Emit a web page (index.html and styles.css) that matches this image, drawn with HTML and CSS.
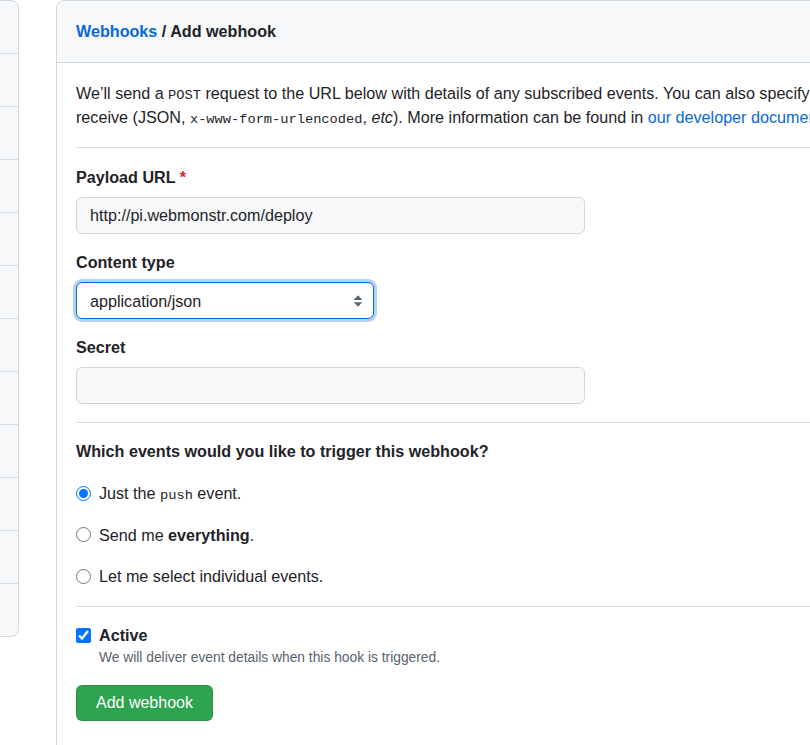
FILE: index.html
```html
<!DOCTYPE html>
<html lang="en">
<head>
<meta charset="utf-8">
<title>Add webhook</title>
<link rel="stylesheet" href="styles.css">
</head>
<body>
<div class="layout">
  <nav class="menu" aria-label="Settings">
    <a class="menu-item" href="#" aria-label="General"></a>
    <a class="menu-item" href="#" aria-label="Access"></a>
    <a class="menu-item" href="#" aria-label="Branches"></a>
    <a class="menu-item" href="#" aria-label="Tags"></a>
    <a class="menu-item" href="#" aria-label="Rules"></a>
    <a class="menu-item" href="#" aria-label="Actions"></a>
    <a class="menu-item" href="#" aria-label="Webhooks"></a>
    <a class="menu-item" href="#" aria-label="Pages"></a>
    <a class="menu-item" href="#" aria-label="Security"></a>
    <a class="menu-item" href="#" aria-label="Secrets"></a>
    <a class="menu-item" href="#" aria-label="Apps"></a>
    <a class="menu-item" href="#" aria-label="Email"></a>
  </nav>
  <main class="card">
    <div class="card-header"><a class="crumb-link" href="#">Webhooks</a> / Add webhook</div>
    <form class="card-body">
      <p class="intro">We’ll send a <code>POST</code> request to the URL below with details of any subscribed events. You can also specify which data format you’d like to receive (JSON, <code>x-www-form-urlencoded</code>, <em>etc</em>). More information can be found in <a href="#">our developer documentation</a>.</p>
      <hr class="divider">
      <div class="group">
        <label class="label" for="url">Payload URL <span class="req">*</span></label>
        <input class="input" id="url" type="text" value="http://pi.webmonstr.com/deploy">
      </div>
      <div class="group">
        <label class="label" for="ctype">Content type</label>
        <div class="select-wrap">
          <select class="select" id="ctype">
            <option>application/json</option>
            <option>application/x-www-form-urlencoded</option>
          </select>
          <svg class="select-arrow" viewBox="0 0 16 16" width="18" height="18" aria-hidden="true"><path d="M4.427 9.427l3.396 3.396a.25.25 0 00.354 0l3.396-3.396A.25.25 0 0011.396 9H4.604a.25.25 0 00-.177.427zM4.427 6.573l3.396-3.396a.25.25 0 01.354 0l3.396 3.396A.25.25 0 0111.396 7H4.604a.25.25 0 01-.177-.427z"/></svg>
        </div>
      </div>
      <div class="group">
        <label class="label" for="secret">Secret</label>
        <input class="input" id="secret" type="text" value="">
      </div>
      <hr class="divider divider-events">
      <h3 class="events-title">Which events would you like to trigger this webhook?</h3>
      <div class="options">
        <label class="option"><input type="radio" name="ev" checked> <span>Just the <code>push</code> event.</span></label>
        <label class="option"><input type="radio" name="ev"> <span>Send me <strong>everything</strong>.</span></label>
        <label class="option"><input type="radio" name="ev"> <span>Let me select individual events.</span></label>
      </div>
      <hr class="divider divider-active">
      <label class="check-row"><input type="checkbox" checked> <span class="check-label">Active</span></label>
      <p class="note">We will deliver event details when this hook is triggered.</p>
      <button class="btn-primary" type="submit">Add webhook</button>
    </form>
  </main>
</div>
</body>
</html>
```

FILE: styles.css
```css
html, body {
  overflow: hidden;
}

body {
  margin: 0;
  background: #ffffff;
  color: #1f2328;
  font-family: "Liberation Sans", Arial, sans-serif;
  font-size: 16.15px;
  line-height: 24px;
}

.layout {
  display: flex;
  align-items: flex-start;
  gap: 37px;
  margin-left: -202px;
}

.menu {
  flex: 0 0 219px;
  display: flex;
  flex-direction: column;
  border: 1px solid #d0d7de;
  border-radius: 8px;
  background: #f6f8fa;
  overflow: hidden;
}

.menu-item {
  display: block;
  box-sizing: border-box;
  height: 53px;
  border-bottom: 1px solid #d8dee4;
}

.menu-item:last-child {
  height: 52px;
  border-bottom: 0;
}

.card {
  flex: 0 0 1020px;
  border: 1px solid #d0d7de;
  border-radius: 8px;
}

.card-header {
  padding: 18px 19px 19px;
  background: #f6f8fa;
  border-bottom: 1px solid #d0d7de;
  border-radius: 8px 8px 0 0;
  font-weight: bold;
  line-height: 24px;
}

.crumb-link {
  color: #0969da;
  text-decoration: none;
}

.card-body {
  padding: 18px 19px 40px;
}

.intro {
  margin: 0;
  line-height: 24px;
}

.intro a {
  color: #0969da;
  text-decoration: none;
}

code {
  font-family: "Liberation Mono", monospace;
  font-size: 13.7px;
  line-height: 1;
}

.divider {
  height: 1px;
  margin: 18px 0 17px;
  border: 0;
  background: #d8dee4;
}

.group {
  display: flex;
  flex-direction: column;
  align-items: flex-start;
  gap: 8px;
}

.group + .group {
  margin-top: 16px;
}

.label {
  font-weight: bold;
  line-height: 24px;
}

.req {
  color: #d1242f;
}

.input {
  box-sizing: border-box;
  width: 509px;
  height: 37px;
  padding: 0 13px;
  border: 1px solid #d0d7de;
  border-radius: 6px;
  background: #f6f8fa;
  color: #1f2328;
  font: inherit;
  outline: none;
}

.select-wrap {
  position: relative;
  width: 298px;
}

.select {
  appearance: none;
  -webkit-appearance: none;
  display: block;
  box-sizing: border-box;
  width: 100%;
  height: 37px;
  padding: 0 30px 0 13px;
  border: 1px solid #0969da;
  border-radius: 6px;
  background: #ffffff;
  box-shadow: 0 0 0 3px rgba(9, 105, 218, 0.3);
  color: #1f2328;
  font: inherit;
  outline: none;
}

.select-arrow {
  position: absolute;
  top: 9.5px;
  right: 7px;
  fill: #59636e;
  pointer-events: none;
}

.divider-events {
  margin: 18px 0 16px;
}

.events-title {
  margin: 0 0 18px;
  font-size: 16.15px;
  font-weight: bold;
  line-height: 24px;
}

.options {
  display: flex;
  flex-direction: column;
  gap: 17.5px;
}

.option,
.check-row {
  display: flex;
  align-items: center;
  gap: 8px;
  height: 24px;
  line-height: 24px;
}

.option input,
.check-row input {
  width: 15px;
  height: 15px;
  margin: 0;
}

.divider-active {
  margin: 18px 0 16px;
}

.check-label {
  font-weight: bold;
}

.note {
  margin: 0 0 0 23px;
  padding-top: 1px;
  color: #59636e;
  font-size: 13.8px;
  line-height: 20px;
}

.btn-primary {
  display: block;
  box-sizing: border-box;
  height: 36px;
  margin-top: 17px;
  padding: 0 19px;
  border: 1px solid rgba(31, 35, 40, 0.15);
  border-radius: 6px;
  background: #2da44e;
  color: #ffffff;
  font: inherit;
  font-size: 16px;
  line-height: 24px;
  cursor: pointer;
}
```
